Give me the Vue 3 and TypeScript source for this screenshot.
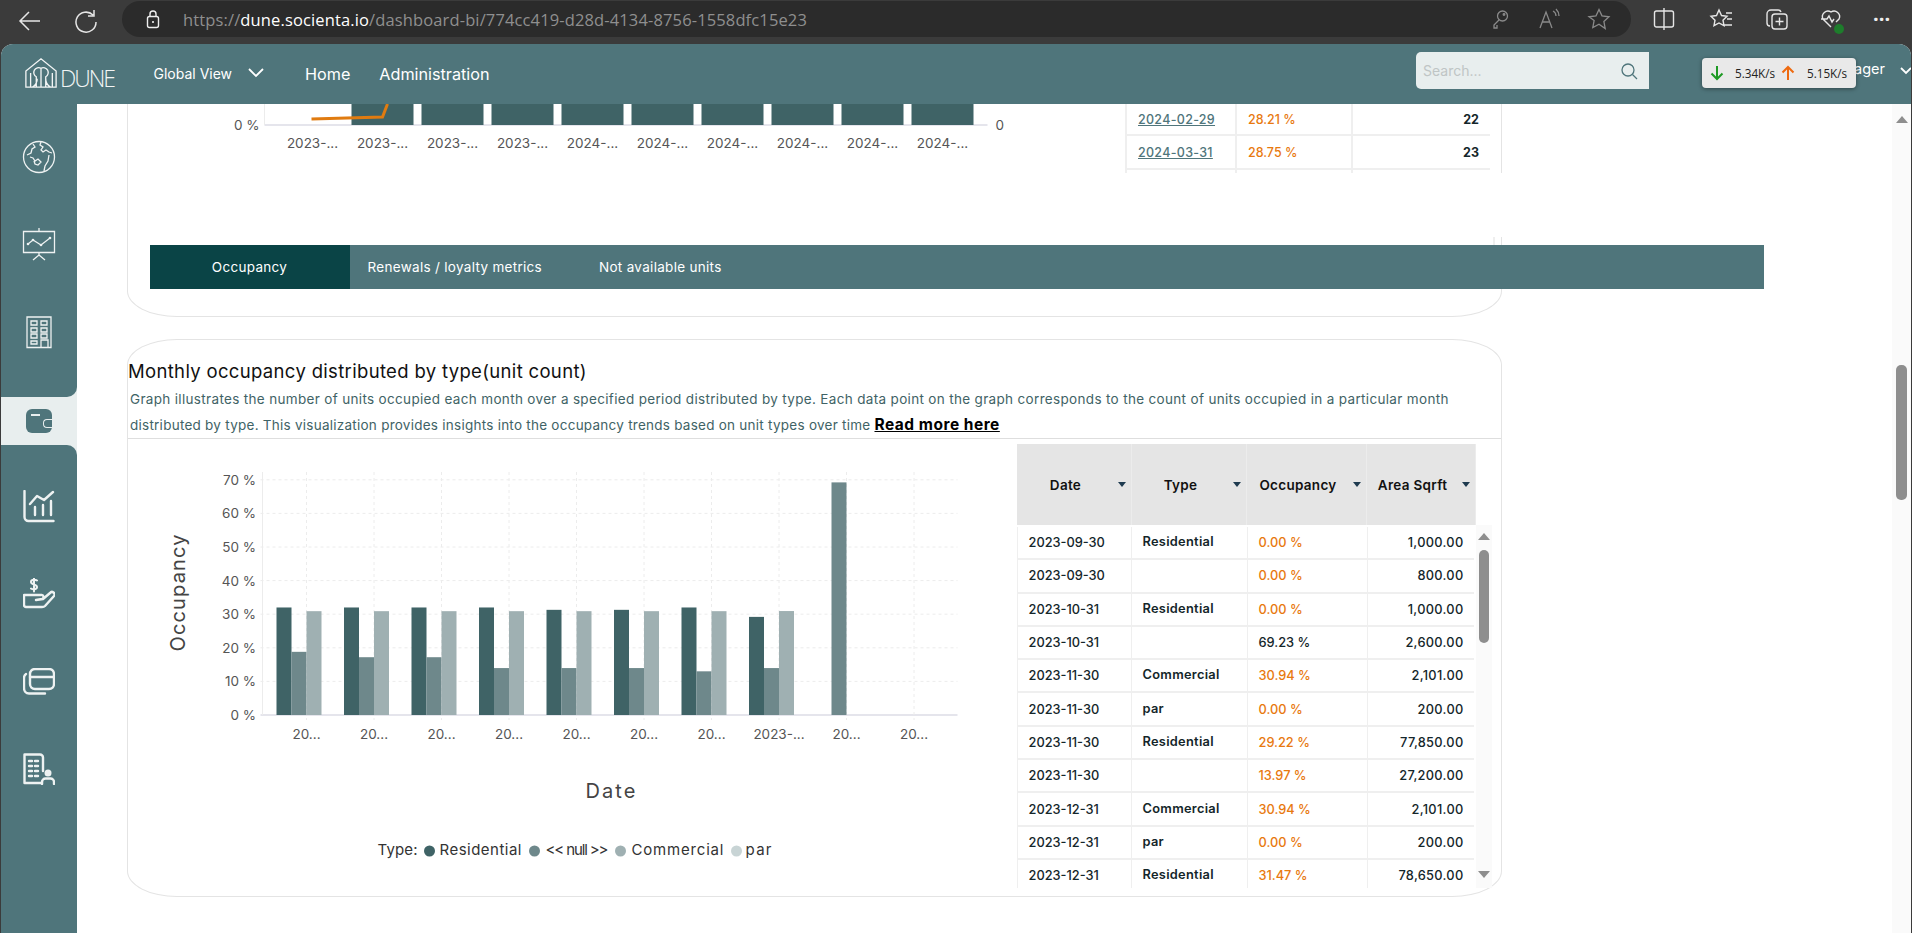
<script setup lang="ts">
const yTicks = [0, 10, 20, 30, 40, 50, 60, 70]
const y = (v: number) => 715 - v * 3.36
const ticks = Array.from({ length: 10 }, (_, i) => 307 + i * 67.5)
const xLabels = ['20...', '20...', '20...', '20...', '20...', '20...', '20...', '2023-...', '20...', '20...']
const colors = ['#3f6366', '#6e888b', '#9fb0b2', '#c8d4d5']
const series: number[][] = [
  [32, 18.8, 30.9],
  [32, 17.2, 30.9],
  [32, 17.2, 30.9],
  [32, 13.97, 30.9],
  [31.3, 13.97, 30.9],
  [31.3, 13.97, 30.9],
  [32, 13, 30.9],
  [29.2, 13.97, 30.94],
  [0, 69.23, 0],
  [0, 0, 0],
]
const bars = series.flatMap((group, i) =>
  group
    .map((v, j) => ({ key: `${i}-${j}`, x: ticks[i] - 30 + j * 15, top: y(v), h: v * 3.36, fill: colors[j] }))
    .filter((b) => b.h > 0),
)
const topTicks = Array.from({ length: 10 }, (_, i) => 313 + i * 70)
const topLabels = ['2023-...', '2023-...', '2023-...', '2023-...', '2024-...', '2024-...', '2024-...', '2024-...', '2024-...', '2024-...']
const topBars = Array.from({ length: 9 }, (_, i) => 352 + i * 70)
const topRows = [
  { d: '2024-02-29', o: '28.21 %', n: '22' },
  { d: '2024-03-31', o: '28.75 %', n: '23' },
  { d: '', o: '', n: '' },
]
const legend = [
  { t: 'Residential', dot: 430, x: 440, w: 82, c: colors[0] },
  { t: '<< null >>', dot: 535, x: 546, w: 63, c: colors[1] },
  { t: 'Commercial', dot: 621, x: 632, w: 92, c: colors[2] },
  { t: 'par', dot: 737, x: 746, w: 26, c: colors[3] },
]
const heads = ['Date', 'Type', 'Occupancy', 'Area Sqrft']
const rows = [
  ['2023-09-30', 'Residential', '0.00 %', '1,000.00'],
  ['2023-09-30', '', '0.00 %', '800.00'],
  ['2023-10-31', 'Residential', '0.00 %', '1,000.00'],
  ['2023-10-31', '', '69.23 %', '2,600.00'],
  ['2023-11-30', 'Commercial', '30.94 %', '2,101.00'],
  ['2023-11-30', 'par', '0.00 %', '200.00'],
  ['2023-11-30', 'Residential', '29.22 %', '77,850.00'],
  ['2023-11-30', '', '13.97 %', '27,200.00'],
  ['2023-12-31', 'Commercial', '30.94 %', '2,101.00'],
  ['2023-12-31', 'par', '0.00 %', '200.00'],
  ['2023-12-31', 'Residential', '31.47 %', '78,650.00'],
]
const dark = (o: string) => o.startsWith('69')
</script>

<template>
  <div class="page">
    <div class="browser">
      <svg class="b-ico back" width="24" height="24" viewBox="0 0 24 24"><path d="M22 12H2M11 3l-9 9 9 9" /></svg>
      <svg class="b-ico reload" width="24" height="24" viewBox="0 0 24 24"><path d="M19 6a10 10 0 1 0 3 7M20 1v6h-6" /></svg>
      <div class="address">
        <svg class="lock" width="16" height="20" viewBox="0 0 16 20"><rect x="2.5" y="7.5" width="11" height="11" rx="2" /><path d="M5 7.5V5a3 3 0 0 1 6 0v2.5" /><circle cx="8" cy="13" r="1" class="solid" /></svg>
        <span class="url"><i>https://</i><b>dune.socienta.io</b><i>/dashboard-bi/774cc419-d28d-4134-8756-1558dfc15e23</i></span>
        <span class="addr-tools">
          <svg class="dim" width="22" height="22" viewBox="0 0 22 22"><circle cx="13.5" cy="8" r="5" /><path d="M10 12l-5 5v3h3v-3" /><circle cx="15" cy="6.5" r=".8" /></svg>
          <svg class="dim" width="24" height="22" viewBox="0 0 24 22"><path d="M3 20L9 4l6 16M5 14h8M16 3c2 1 3 3 3 5M19 1c2 2 3 4 3 7" /></svg>
          <svg class="dim" width="24" height="24" viewBox="0 0 24 24"><path d="M12 2.5l3 6.400 7 .9-5.100 4.800 1.300 7L12 17.200 5.800 20.600l1.300-7L2 9.800l7-.9z" /></svg>
        </span>
      </div>
      <div class="b-tools">
        <svg width="22" height="24" viewBox="0 0 22 24"><rect x="1.500" y="4" width="19" height="16" rx="2" /><path d="M11 1v22" /></svg>
        <svg class="t2i" width="24" height="24" viewBox="0 0 24 24"><path d="M10 3l2.500 5.500 5.500.7-4 4 1 5.500-5-2.700-5 2.700 1-5.500-4-4 5.500-.7zM17 6h6M18 12h5M15 18h8" /></svg>
        <svg class="t3i" width="24" height="24" viewBox="0 0 24 24"><path d="M5 19a3 3 0 0 1-3-3V7a4 4 0 0 1 4-4h7a3 3 0 0 1 3 2" /><rect x="7" y="7" width="15" height="15" rx="3" /><path d="M14.500 10.500v8M10.500 14.500h8" /></svg>
        <span class="health">
          <svg width="24" height="24" viewBox="0 0 24 24"><path d="M12 20l-8-8a5.500 5.500 0 0 1 8-7 5.500 5.500 0 0 1 8 7l-3 3M2 12h6l2-3 3 6 2-3" /></svg>
          <em class="ok"></em>
        </span>
        <span class="dots">···</span>
      </div>
    </div>

    <div class="app">
      <header class="top">
        <div class="logo">
          <svg width="34" height="32" viewBox="0 0 36 32"><path d="M2 31V14L18 1l16 13v17H2zM7 31V16M30 31V16M13 31V20a5 5 0 0 1 5-9 5 5 0 0 1 5 9v11M18 11v20M9 31c3-2 5-5 5-9M28 31c-3-2-5-5-5-9" /></svg>
          <span>DUNE</span>
        </div>
        <div class="view">Global View</div>
        <svg class="chev" width="18" height="10" viewBox="0 0 18 10"><path d="M2 1l7 7 7-7" /></svg>
        <nav class="nav"><a>Home</a><a>Administration</a></nav>
        <div class="search">
          <span>Search...</span>
          <svg width="18" height="18" viewBox="0 0 18 18"><circle cx="8" cy="8" r="6" /><path d="M12.500 12.500L17 17" /></svg>
        </div>
        <div class="user">Manager</div>
        <svg class="chev user-chev" width="12" height="8" viewBox="0 0 12 8"><path d="M1 1l5 5 5-5" /></svg>
        <div class="net">
          <svg width="14" height="16" viewBox="0 0 14 16" class="down"><path d="M7 1v13M1.500 8.500L7 14l5.500-5.500" /></svg>
          <span>5.34K/s</span>
          <svg width="14" height="16" viewBox="0 0 14 16" class="up"><path d="M7 15V2M1.500 7.500L7 2l5.500 5.500" /></svg>
          <span>5.15K/s</span>
        </div>
      </header>

      <div class="body">
        <aside class="side">
          <div class="side-top">
            <div class="item">
              <svg width="34" height="34" viewBox="0 0 34 34"><circle cx="17" cy="17" r="15.500" /><path d="M11 4l2 3-3 2-1 4-4 2M19 2l-1 3 3 2-2 3 2 2 3-2 3 2 3 1M8 17l3 1 2 3 3-2 3 3-3 3-3-1-1-3M27 15l-1 6-3 5-1 5" /></svg>
            </div>
            <div class="item">
              <svg width="34" height="34" viewBox="0 0 34 34"><path d="M1.500 4.500h31v21h-31zM17 1v3.500M17 25.500v3M17 28l-6 5M17 28l6 5" /><path d="M6 17l5-4 8 5 9-7" /><circle cx="6" cy="17" r="1.300" class="solid" /><circle cx="11" cy="13" r="1.300" class="solid" /><circle cx="19" cy="18" r="1.300" class="solid" /><circle cx="28" cy="11" r="1.300" class="solid" /></svg>
            </div>
            <div class="item">
              <svg width="26" height="34" viewBox="0 0 26 34"><path d="M1 2h24v30.500H1zM5 6h6v4H5zM15 6h6v4h-6zM5 13h6v4H5zM15 13h6v4h-6zM5 19h6v4H5zM15 19h6v4h-6zM5 26h6v3H5zM15 32.500V25h7v7.500" /></svg>
            </div>
          </div>
          <div class="item active">
            <span class="wallet"><i class="w-line"></i><i class="w-clasp"></i></span>
          </div>
          <div class="side-bottom">
            <div class="item thick">
              <svg width="32" height="33" viewBox="0 0 32 33"><path d="M1.500 1v26a4 4 0 0 0 4 4h25M7 14l7-8 7 4 9-8M12 17v8M20 15v10M28 11v14" /></svg>
            </div>
            <div class="item thick">
              <svg width="32" height="32" viewBox="0 0 32 32"><path d="M14 2.500c-2-1.500-6-1-6 1.500 0 3 6 2 6 5 0 2.500-4 3-6 1.500M11 .5v13" class="thin" /><path d="M1 17h17a2 2 0 0 1 1 4l-6 1 7-1 7-6a2 2 0 0 1 4 3l-9 10c-1 1-2 1-3 1H3a2 2 0 0 1-2-2z" /></svg>
            </div>
            <div class="item thick">
              <svg width="32" height="27" viewBox="0 0 32 27"><rect x="7" y="1" width="24" height="20" rx="5" /><path d="M7 9h24M3 6C1.500 7 1 8 1 10v10c0 3 2 5.500 5 5.500h16" /></svg>
            </div>
            <div class="item thick">
              <svg width="32" height="32" viewBox="0 0 32 32"><path d="M19 30H1.500V1.500H17a3 3 0 0 1 3 3V18" /><path d="M6 8h3M12 8h3M6 13h3M12 13h3M6 18h3M12 18h3M6 23h3M12 23h3" /><circle cx="25" cy="20" r="3.500" class="solid" /><path d="M19 31v-2a3.500 3.500 0 0 1 3.500-3.500h5A3.500 3.500 0 0 1 31 29v2" /></svg>
            </div>
          </div>
        </aside>

        <main class="main">
          <section class="card top-card">
            <div class="top-row">
              <svg class="top-chart" width="997" height="69" viewBox="128.5 104 997 69">
                <line x1="265" y1="125" x2="988" y2="125" class="axis" />
                <line x1="265" y1="104" x2="265" y2="125" class="grid-solid" />
                <rect v-for="b in topBars" :key="b" :x="b" y="104" width="62" height="21" fill="#3f6366" />
                <polyline points="312,119 383,117 388,104" fill="none" stroke="#e07b10" stroke-width="3" />
                <text x="260" y="130" text-anchor="end" class="lab">0 %</text>
                <text x="996" y="130" class="lab">0</text>
                <text v-for="(t, i) in topLabels" :key="i" :x="topTicks[i]" y="148" text-anchor="middle" class="lab">{{ t }}</text>
              </svg>
              <div class="top-table">
                <template v-for="(r, i) in topRows" :key="i">
                  <div class="tc"><a class="lnk">{{ r.d }}</a></div>
                  <div class="tc orange">{{ r.o }}</div>
                  <div class="tc num">{{ r.n }}</div>
                </template>
              </div>
            </div>
            <span class="gap"></span>
            <div class="tabs">
              <div class="tab on">Occupancy</div>
              <div class="tab t2">Renewals / loyalty metrics</div>
              <div class="tab t3">Not available units</div>
            </div>
          </section>

          <section class="card second">
            <h2>Monthly occupancy distributed by type(unit count)</h2>
            <p class="desc">
              Graph illustrates the number of units occupied each month over a specified period distributed by type. Each data point on the graph corresponds to the count of units occupied in a particular month<br /><span class="line2">distributed by type. This visualization provides insights into the occupancy trends based on unit types over time </span><a class="more">Read more here</a>
            </p>
            <div class="card-body">
              <svg class="chart" width="888.500" height="456" viewBox="128.5 439 888.500 456">
                <g v-for="v in yTicks" :key="v">
                  <line x1="261" :y1="y(v)" x2="958" :y2="y(v)" :class="v === 0 ? 'axis' : 'grid'" />
                  <text x="256.500" :y="y(v) + 5" text-anchor="end" class="lab">{{ v }} %</text>
                </g>
                <line x1="263" y1="472" x2="263" y2="715" class="grid-solid" />
                <line v-for="t in ticks" :key="t" :x1="t" y1="472" :x2="t" y2="720" class="grid" />
                <rect v-for="b in bars" :key="b.key" :x="b.x" :y="b.top" width="15" :height="b.h" :fill="b.fill" />
                <text v-for="(t, i) in xLabels" :key="i" :x="ticks[i]" y="739" text-anchor="middle" class="lab">{{ t }}</text>
                <text x="611" y="798" text-anchor="middle" class="axis-title" textLength="50">Date</text>
                <text x="185" y="593" text-anchor="middle" transform="rotate(-90 185 593)" class="axis-title" textLength="117">Occupancy</text>
                <text x="378" y="855" class="leg" textLength="40">Type:</text>
                <g v-for="l in legend" :key="l.t">
                  <circle :cx="l.dot" cy="851" r="5.500" :fill="l.c" />
                  <text :x="l.x" y="855" class="leg" :textLength="l.w">{{ l.t }}</text>
                </g>
              </svg>
              <div class="tbl-wrap">
                <div class="tbl">
                  <div class="thead">
                    <div v-for="h in heads" :key="h" class="th">
                      <span>{{ h }}</span><i class="caret"></i>
                    </div>
                  </div>
                  <div class="tbody">
                    <div v-for="(r, i) in rows" :key="i" class="tr">
                      <div class="td">{{ r[0] }}</div>
                      <div class="td ty">{{ r[1] }}</div>
                      <div class="td" :class="{ orange: !dark(r[2]) }">{{ r[2] }}</div>
                      <div class="td right">{{ r[3] }}</div>
                    </div>
                  </div>
                </div>
                <div class="inner-bar">
                  <i class="arrow up-a"></i>
                  <i class="thumb"></i>
                  <i class="arrow down-a"></i>
                </div>
              </div>
            </div>
          </section>
        </main>

        <div class="page-bar">
          <i class="arrow up-a"></i>
          <i class="thumb"></i>
        </div>
      </div>
    </div>
  </div>
</template>

<style>
html, body { margin: 0; background: #3b3b3b; overflow: hidden; }
</style>

<style scoped>
.page {
  width: 1912px;
  height: 933px;
  display: flex;
  flex-direction: column;
  overflow: hidden;
  background: #3b3b3b;
  font-family: Inter, "Noto Sans", sans-serif;
}
.browser {
  height: 44px;
  flex: none;
  display: flex;
  align-items: flex-start;
  box-sizing: border-box;
  padding-top: 1px;
  font-family: "Open Sans", sans-serif;
}
.b-ico { fill: none; stroke: #e6e6e6; stroke-width: 1.500; margin-top: 8px; }
.back { margin-left: 18px; }
.reload { margin-left: 32px; }
.address {
  margin-left: 24px;
  width: 1509px;
  height: 36px;
  background: #2b2b2b;
  border-radius: 18px;
  display: flex;
  align-items: center;
}
.lock { margin-left: 23px; fill: none; stroke: #eee; stroke-width: 1.400; }
.solid { fill: #fff; stroke: none; }
.url { margin-left: 22px; font-size: 16.500px; white-space: nowrap; letter-spacing: .13px; }
.url i { font-style: normal; color: #8f8f8f; }
.url b { font-weight: 400; color: #fff; }
.addr-tools { margin-left: auto; margin-right: 20px; display: flex; align-items: center; gap: 26px; }
.dim { fill: none; stroke: #8a8a8a; stroke-width: 1.300; }
.b-tools { margin-left: 22px; display: flex; align-items: center; height: 36px; }
.b-tools svg { fill: none; stroke: #e6e6e6; stroke-width: 1.400; display: block; }
.t2i { margin-left: 34px; }
.t3i { margin-left: 32px; }
.health { position: relative; display: block; margin-left: 30px; }
.ok { position: absolute; right: -1px; bottom: -3px; width: 10px; height: 10px; border-radius: 50%; background: #1e7d2c; }
.dots { color: #eee; font-size: 20px; font-weight: 700; line-height: 1; margin-left: 30px; }
.app {
  flex: 1;
  margin: 0 1px 0 1px;
  display: flex;
  flex-direction: column;
  min-height: 0;
  background: #fff;
  border-radius: 12px 12px 0 0;
  overflow: hidden;
}
.top {
  flex: none;
  height: 60px;
  background: #4f757b;
  position: relative;
  display: flex;
  align-items: center;
  color: #fff;
}
.logo { margin-left: 23px; width: 91px; display: flex; align-items: flex-end; height: 32px; margin-top: -2px; }
.logo svg { fill: none; stroke: #f2f5f5; stroke-width: 1.400; display: block; flex: none; }
.logo span {
  font-family: "Open Sans", sans-serif;
  font-weight: 300;
  font-size: 23px;
  line-height: 22px;
  letter-spacing: -2px;
  margin-left: 2px;
  color: #f2f5f5;
}
.view { margin-left: 38.500px; font-size: 14px; margin-top: -2px; width: 78px; white-space: nowrap; }
.chev { fill: none; stroke: #fff; stroke-width: 1.800; margin-left: 15px; margin-top: -3px; }
.nav { margin-left: 40.500px; display: flex; gap: 29px; font-size: 16.200px; }
.search {
  position: relative;
  margin-left: auto;
  margin-right: 262px;
  width: 233px;
  height: 37px;
  box-sizing: border-box;
  padding: 0 11px 0 7px;
  background: #e8eeee;
  border-radius: 5px 0 0 5px;
  display: flex;
  align-items: center;
  justify-content: space-between;
  color: #bfc5c5;
  font-size: 14px;
  margin-top: -7px;
}
.search svg { fill: none; stroke: #4f757b; stroke-width: 1.300; }
.user { position: absolute; right: 26px; top: 16px; font-size: 14.500px; }
.user-chev { position: absolute; right: -1px; top: 23px; margin: 0; }
.net {
  position: absolute;
  left: 1701px;
  top: 14px;
  width: 154px;
  height: 30px;
  box-sizing: border-box;
  padding-left: 8px;
  background: #e9e9e9;
  border-radius: 4px;
  box-shadow: 0 1px 4px rgba(0, 0, 0, .4);
  display: flex;
  align-items: center;
  font-family: "Open Sans", sans-serif;
  font-size: 11.700px;
  color: #222;
}
.net svg { fill: none; stroke-width: 2; flex: none; }
.net span { width: 40px; white-space: nowrap; }
.down { stroke: #1e9a24; margin-right: 11px; }
.up { stroke: #ee6a10; margin: 0 12px 0 6px; }
.body { flex: 1; display: flex; min-height: 0; }
.side {
  flex: none;
  width: 76px;
  background: #e8eeee;
  display: flex;
  flex-direction: column;
}
.side-top {
  height: 293px;
  box-sizing: border-box;
  padding-top: 9px;
  background: #4f757b;
  border-bottom-right-radius: 10px;
}
.side-bottom {
  flex: 1;
  box-sizing: border-box;
  padding-top: 18px;
  background: #4f757b;
  border-top-right-radius: 10px;
}
.item {
  height: 87.500px;
  display: flex;
  align-items: center;
  justify-content: center;
}
.item svg { fill: none; stroke: #eef2f2; stroke-width: 1.300; }
.item .solid { fill: #eef2f2; stroke: none; }
.thick svg { stroke-width: 2.400; stroke-linecap: round; stroke-linejoin: round; }
.thick .thin { stroke-width: 2; }
.active { height: 48px; }
.wallet {
  display: block;
  position: relative;
  width: 26px;
  height: 24px;
  background: #4f757b;
  border-radius: 6px;
}
.w-line { position: absolute; left: 5px; top: 5px; width: 9px; height: 2px; background: #e8eeee; }
.w-clasp {
  position: absolute;
  right: 0;
  top: 10px;
  width: 8px;
  height: 7px;
  background: #4f757b;
  border: 1.500px solid #e8eeee;
  border-right: 0;
  border-radius: 4px 0 0 4px;
}
.main { flex: 1; min-width: 0; position: relative; overflow: hidden; }
.card {
  box-sizing: border-box;
  width: 1375px;
  margin-left: 50px;
  border: 1.500px solid #e4e4e4;
  position: relative;
}
.top-card {
  height: 212.500px;
  border-top: 0;
  border-radius: 0 0 50px 50px / 0 0 26px 26px;
}
.top-row { height: 69px; display: flex; overflow: hidden; }
.top-chart { flex: none; display: block; }
.lab { font-size: 13.500px; fill: #555; font-family: Inter, sans-serif; }
.axis { stroke: #dcdce6; stroke-width: 1.500; }
.grid { stroke: #ececec; stroke-width: 1; stroke-dasharray: 3 3; }
.grid-solid { stroke: #ececec; stroke-width: 1; }
.top-table {
  flex: none;
  width: 365px;
  display: grid;
  grid-template-columns: 108px 114px 137px;
  grid-template-rows: 30px 32px 8px;
  gap: 2px;
  background: #efefef;
  padding: 0 2px;
  box-sizing: border-box;
  font-size: 12.500px;
  font-weight: 500;
}
.tc { background: #fff; display: flex; align-items: center; padding: 0 11px; box-sizing: border-box; }
.lnk { color: #4f757b; text-decoration: underline; letter-spacing: .3px; }
.orange { color: #e8790f; }
.num { justify-content: flex-end; color: #14262a; font-weight: 700; }
.gap { position: absolute; top: 69px; right: -3px; width: 13px; height: 64px; background: #fff; }
.gap::after { content: ""; position: absolute; top: 64px; left: 2px; width: 2px; height: 8px; background: #efefef; }
.tabs {
  position: absolute;
  top: 141px;
  left: 21.500px;
  width: 1614px;
  height: 44px;
  background: #4f757b;
  display: flex;
  align-items: center;
  color: #fff;
  font-size: 13.500px;
  font-weight: 400;
  letter-spacing: .3px;
}
.tab { height: 100%; display: flex; align-items: center; justify-content: center; white-space: nowrap; }
.tab.on { width: 200px; background: #0a4446; }
.t2 { margin-left: 18px; }
.t3 { margin-left: 57px; }
.second {
  height: 558.500px;
  margin-top: 22px;
  border-radius: 50px / 26px;
}
h2 {
  margin: 0;
  padding: 17px 0 0 0;
  font-size: 18.500px;
  line-height: 28px;
  font-weight: 400;
  color: #111;
  letter-spacing: .33px;
  height: 46px;
  box-sizing: border-box;
}
.desc {
  margin: 0;
  padding: 0 0 0 2px;
  box-sizing: border-box;
  font-size: 13.500px;
  line-height: 26px;
  letter-spacing: .33px;
  color: #3f6366;
  height: 52.500px;
  white-space: nowrap;
}
.line2 { letter-spacing: .25px; }
.more {
  font-size: 15.500px;
  line-height: 1;
  font-weight: 700;
  letter-spacing: .5px;
  color: #000;
  text-decoration: underline;
}
.card-body {
  border-top: 1.500px solid #dedede;
  display: flex;
  height: 456px;
}
.chart { flex: none; display: block; }
.axis-title { font-size: 20px; fill: #444; font-family: Inter, sans-serif; }
.leg { font-size: 15px; fill: #333; font-family: Inter, sans-serif; }
.tbl-wrap { display: flex; height: 444px; margin-top: 5px; }
.tbl { width: 459px; overflow: hidden; background: #fff; }
.thead {
  height: 81px;
  background: #e5e5e5;
  display: grid;
  grid-template-columns: 115px 115px 120px 109px;
}
.th {
  display: flex;
  align-items: center;
  justify-content: center;
  position: relative;
  font-size: 13.500px;
  font-weight: 600;
  letter-spacing: .3px;
  color: #111;
  border-right: 1px solid #ececec;
  box-sizing: border-box;
  padding-right: 16px;
  white-space: nowrap;
}
.caret {
  position: absolute;
  right: 5px;
  top: 38px;
  border: 4px solid transparent;
  border-top: 5px solid #1e3a4f;
  border-bottom: 0;
}
.tbody { background: #efefef; width: 457px; }
.tr {
  display: grid;
  grid-template-columns: 114px 115px 119px 107px;
  column-gap: 1px;
  height: 31.300px;
  margin-top: 2px;
}
.td {
  background: #fff;
  display: flex;
  align-items: center;
  padding: 0 11px;
  font-size: 12.800px;
  font-weight: 500;
  color: #14262a;
  white-space: nowrap;
  box-sizing: border-box;
}
.td:first-child { margin-left: 1px; }
.td.orange { color: #e8790f; }
.td.ty { padding-bottom: 2px; font-weight: 600; letter-spacing: .3px; }
.td.right { justify-content: flex-end; letter-spacing: .3px; }
.inner-bar {
  width: 16px;
  margin-top: 81px;
  background: #fafafa;
  display: flex;
  flex-direction: column;
  align-items: center;
  position: relative;
}
.arrow { display: block; border: 6px solid transparent; flex: none; }
.up-a { border-top: 0; border-bottom: 7px solid #8e8e8e; }
.down-a { border-bottom: 0; border-top: 7px solid #8e8e8e; margin-top: auto; margin-bottom: 10px; }
.thumb { display: block; background: #8e8e8e; border-radius: 5px; flex: none; }
.inner-bar .up-a { margin-top: 8px; }
.inner-bar .thumb { width: 10px; height: 93px; margin-top: 10px; }
.page-bar {
  flex: none;
  width: 19px;
  background: #fafafa;
  display: flex;
  flex-direction: column;
  align-items: center;
}
.page-bar .up-a { margin-top: 12px; }
.page-bar .thumb { width: 11px; height: 135px; margin-top: 242px; }
</style>
